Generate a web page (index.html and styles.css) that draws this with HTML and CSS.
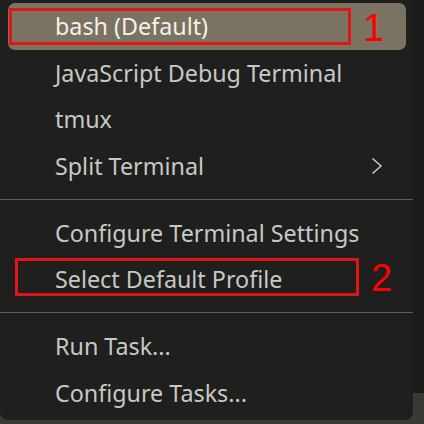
FILE: index.html
```html
<!DOCTYPE html>
<html>
<head>
<meta charset="utf-8">
<link rel="stylesheet" href="styles.css">
</head>
<body>
<div class="scene">
  <div class="menu">
    <div class="item active">
      <span class="label">bash (Default)</span>
      <span class="mark mark1"></span>
      <span class="num num1">1</span>
    </div>
    <div class="item"><span class="label">JavaScript Debug Terminal</span></div>
    <div class="item"><span class="label">tmux</span></div>
    <div class="item">
      <span class="label">Split Terminal</span>
      <svg class="chev" width="14" height="18" viewBox="0 0 14 18"><path d="M2.5 1.5 L11 9 L2.5 16.5" fill="none" stroke="#c4c4c4" stroke-width="1.6"/></svg>
    </div>
    <div class="sep"></div>
    <div class="item"><span class="label">Configure Terminal Settings</span></div>
    <div class="item">
      <span class="label">Select Default Profile</span>
      <span class="mark mark2"></span>
      <span class="num num2">2</span>
    </div>
    <div class="sep"></div>
    <div class="item"><span class="label">Run Task...</span></div>
    <div class="item"><span class="label">Configure Tasks...</span></div>
  </div>
  <div class="side"></div>
</div>
</body>
</html>
```
FILE: styles.css
```css
html, body {
  margin: 0;
  padding: 0;
  background: #1a1a19;
  width: 424px;
  height: 424px;
  overflow: hidden;
}
.scene {
  display: flex;
  width: 424px;
  height: 424px;
  background: linear-gradient(#1a1a19, #1a1a19) top / 100% 393px no-repeat, #3a3a34;
}
.menu {
  width: 413px;
  height: 420px;
  box-sizing: border-box;
  padding: 3px 0 0 0;
  background: #1f1f1d;
  border-radius: 0 0 8px 8px;
  display: flex;
  flex-direction: column;
  font-family: "Noto Sans", "Open Sans", sans-serif;
  font-size: 23.3px;
  color: #c8c8c8;
}
.item {
  position: relative;
  height: 46.5px;
  flex: none;
  display: flex;
  align-items: center;
  margin: 0 7px 0 8px;
  padding-left: 47px;
  border-radius: 7px;
}
.item.active {
  background: #7a7361;
  color: #f4f1e8;
}
.label {
  white-space: nowrap;
}
.chev {
  position: absolute;
  left: 362px;
  top: 14px;
}
.sep {
  height: 20.5px;
  flex: none;
  display: flex;
  align-items: center;
}
.sep::before {
  content: "";
  display: block;
  width: 100%;
  height: 1px;
  background: #5c5c5a;
}
.mark {
  position: absolute;
  border: 3px solid #e01616;
  box-sizing: border-box;
}
.mark1 {
  left: 1px;
  top: 5px;
  width: 342px;
  height: 37px;
}
.mark2 {
  left: 7px;
  top: 2px;
  width: 344px;
  height: 38px;
}
.num {
  position: absolute;
  font-family: "Liberation Sans", Arial, sans-serif;
  font-size: 38px;
  line-height: 1;
  color: #ff0000;
}
.num1 {
  left: 355px;
  top: 6px;
}
.num2 {
  left: 363px;
  top: 3px;
}
.side {
  flex: 1;
}
```
